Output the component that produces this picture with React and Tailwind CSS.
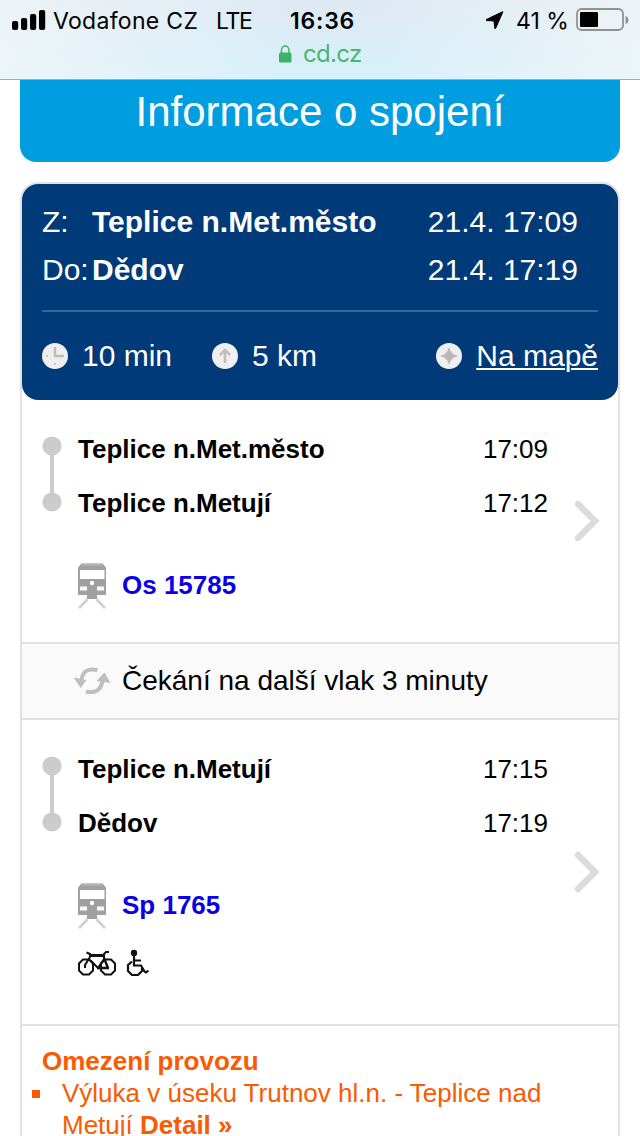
import React from 'react';

const legs = [
    {
        from: 'Teplice n.Met.město',
        departure: '17:09',
        to: 'Teplice n.Metují',
        arrival: '17:12',
        train: 'Os 15785',
        height: 'h-[242px]',
    },
    {
        from: 'Teplice n.Metují',
        departure: '17:15',
        to: 'Dědov',
        arrival: '17:19',
        train: 'Sp 1765',
        height: 'h-[304px]',
        services: true,
    },
];

function SignalIcon() {
    return (
        <svg width="34" height="20" viewBox="0 0 34 20" className="shrink-0">
            <rect x="0" y="11" width="6.2" height="9" rx="2" />
            <rect x="9" y="8" width="6.2" height="12" rx="2" />
            <rect x="18" y="4" width="6.2" height="16" rx="2" />
            <rect x="27" y="0" width="6.2" height="20" rx="2" />
        </svg>
    );
}

function LocationIcon() {
    return (
        <svg width="20" height="19" viewBox="0 0 20 19" className="shrink-0">
            <path d="M17.8 1 10.600 17.400Q10 18.400 9.700 17L9 10 1.800 9.500Q.4 9.200 1.600 8.400L17 1Q18.200.4 17.800 1Z" stroke="#000" strokeWidth="1" strokeLinejoin="round" />
        </svg>
    );
}

function BatteryIcon() {
    return (
        <svg width="54" height="24" viewBox="0 0 54 24" className="shrink-0">
            <rect x="1" y="1" width="46" height="21" rx="4.500" fill="none" stroke="#8f9396" strokeWidth="1.800" />
            <rect x="4" y="4" width="18" height="15" rx="1.200" />
            <path d="M49.500 8q3 1 3 4t-3 4z" fill="#8f9396" />
        </svg>
    );
}

function LockIcon() {
    return (
        <svg width="13" height="18" viewBox="0 0 13 18" className="shrink-0">
            <rect x="0" y="7.500" width="12.500" height="10" rx="1.500" fill="#3cb464" />
            <path d="M2.500 8V5a3.700 4 0 0 1 7.400 0v3" fill="none" stroke="#3cb464" strokeWidth="1.500" />
        </svg>
    );
}

function RoundIcon({ children }) {
    return (
        <svg width="26" height="26" viewBox="0 0 26 26" className="shrink-0">
            <circle cx="13" cy="13" r="13" fill="#efefef" />
            {children}
        </svg>
    );
}

function TrainIcon() {
    return (
        <svg width="28" height="46" viewBox="0 0 28 46" className="shrink-0">
            <path d="M3.500.5h21L28 4.500V32h-9v4H9v-4H0V4.500z" fill="#a0a0a0" />
            <path d="M4 1.500h20" stroke="#b8b8b8" strokeWidth="2" />
            <rect x="2" y="7" width="24.500" height="9" fill="#fff" />
            <circle cx="14" cy="20" r="2.200" fill="#fff" />
            <rect x="2" y="23.500" width="7" height="4" fill="#fafafa" />
            <rect x="19" y="23.500" width="7" height="4" fill="#fafafa" />
            <path d="M9.500 36.500 1 45M18.500 36.500 27 45" fill="none" stroke="#cfcfcf" strokeWidth="2.600" />
        </svg>
    );
}

function TransferIcon() {
    return (
        <svg width="38" height="28" viewBox="0 0 38 28" className="shrink-0">
            <g fill="none" stroke="#bebebe" strokeWidth="4">
                <path d="M8.500 13C9.500 4 15 1 24.500 3" />
                <path d="M29.500 13C28.500 23.500 22 26.500 13 24.500" />
            </g>
            <path d="M.5 10.500 13.500 13 7.800 21zM37.500 16 23.500 14 31.500 5.500z" fill="#bebebe" />
        </svg>
    );
}

function RouteIcon() {
    return (
        <svg width="20" height="76" viewBox="0 0 20 76" className="shrink-0">
            <path d="M10 10v56" stroke="#ccc" strokeWidth="4" />
            <circle cx="10" cy="10" r="9.600" fill="#ccc" />
            <circle cx="10" cy="66" r="9.600" fill="#ccc" />
        </svg>
    );
}

function ChevronIcon() {
    return (
        <svg width="26" height="42" viewBox="0 0 26 42">
            <path d="M4 4 21 21 4 38" fill="none" stroke="#dcdcdc" strokeWidth="6.400" strokeLinecap="round" strokeLinejoin="miter" />
        </svg>
    );
}

function BikeIcon() {
    return (
        <svg width="38" height="26" viewBox="0 0 38 26" fill="none" stroke="#111" strokeWidth="2">
            <path d="M5 9.500h6l4 4v7l-4 4H5l-4-4v-7zM27 9.500h6l4 4v7l-4 4h-6l-4-4v-7z" />
            <path d="M7 18v-3l5-8V4L8.500 2.500M12 10l8 8 6-9V4l2-2h3" />
            <path d="M12 5.500h15" strokeWidth="3" />
            <path d="m26 8 4 10" strokeWidth="2.400" />
            <path d="M19 18h12" strokeWidth="2.600" />
        </svg>
    );
}

function WheelchairIcon() {
    return (
        <svg width="23" height="28" viewBox="0 0 23 28" fill="none" stroke="#111" strokeWidth="2.200">
            <circle cx="8" cy="4" r="3.200" fill="#111" stroke="none" />
            <path d="M8 6v10.500h7l3.500 6 1.500 1 2.500-2M8 11.500h7" />
            <path d="M6 12.500 2 16v6l4 4h6l4-4v-3" />
        </svg>
    );
}

function Leg({ leg }) {
    return (
        <div className={`flex border-b-2 border-[#e1e1e1] box-content pl-5 ${leg.height}`}>
            <div className="w-9 pt-9">
                <RouteIcon />
            </div>
            <div className="w-[470px] pt-[22px]">
                <div className="flex justify-between leading-[54px]">
                    <b>{leg.from}</b>
                    <span>{leg.departure}</span>
                </div>
                <div className="flex justify-between leading-[54px]">
                    <b>{leg.to}</b>
                    <span>{leg.arrival}</span>
                </div>
                <div className="mt-[33px] flex h-[46px] items-center gap-4">
                    <TrainIcon />
                    <b className="relative -top-px text-[#0a00e6]">{leg.train}</b>
                </div>
                {leg.services && (
                    <div className="mt-5 flex items-center gap-2.5">
                        <BikeIcon />
                        <WheelchairIcon />
                    </div>
                )}
            </div>
            <div className="flex items-center pl-[26px]">
                <ChevronIcon />
            </div>
        </div>
    );
}

function StatusBar() {
    return (
        <header className="h-20 border-b border-[#9eadb5] bg-[linear-gradient(90deg,#f1f6f8cc,#f1f6f800_45%,#f1f6f800_60%,#f1f6f8cc),linear-gradient(#dfe9f3,#d6f1fb)] font-['Inter',sans-serif]">
            <div className="flex h-10 items-center pl-3 text-[23px] leading-none">
                <SignalIcon />
                <span className="mt-0.5 ml-[7px] w-[163px] whitespace-nowrap tracking-[0.3px]">Vodafone CZ</span>
                <span className="mt-0.5 w-[74px] tracking-[-1.3px]">LTE</span>
                <span className="mt-0.5 w-[195px] font-semibold tracking-[0.8px]">16:36</span>
                <LocationIcon />
                <span className="mt-0.5 ml-[11px] w-[60px] text-[23px] whitespace-nowrap">41 %</span>
                <BatteryIcon />
            </div>
            <div className="flex h-7 items-center gap-[11px] pl-[279px] text-[24px] leading-none text-[#4bb673]">
                <LockIcon />
                <span className="tracking-[-0.7px]">cd.cz</span>
            </div>
        </header>
    );
}

function Summary() {
    return (
        <div className="h-[216px] rounded-[16px] bg-[#003a78] px-5 pt-3.5 text-[30px] leading-[48px] text-white">
            <div className="flex">
                <span className="w-[50px]">Z:</span>
                <b className="flex-1">Teplice n.Met.město</b>
                <span className="mr-5">21.4. 17:09</span>
            </div>
            <div className="flex">
                <span className="w-[50px]">Do:</span>
                <b className="flex-1">Dědov</b>
                <span className="mr-5">21.4. 17:19</span>
            </div>
            <div className="mt-4 mb-5 h-0.5 bg-[#3268a0]" />
            <div className="flex items-center">
                <RoundIcon>
                    <path d="M13 4v9h9" fill="none" stroke="#bdbdbd" strokeWidth="2.500" />
                    <path d="M4 13h2M13 20v2" stroke="#d8bdb4" strokeWidth="2" />
                </RoundIcon>
                <span className="ml-3.5 w-[130px]">10 min</span>
                <RoundIcon>
                    <path d="M13 20V8M8 12l5-5 5 5" fill="none" stroke="#bdbdbd" strokeWidth="2.500" />
                </RoundIcon>
                <span className="ml-3.5 flex-1">5 km</span>
                <RoundIcon>
                    <circle cx="13" cy="13" r="5" fill="#cfcfcf" />
                    <path d="m13 4 2.400 6.600L22 13l-6.600 2.400L13 22l-2.400-6.600L4 13l6.600-2.400z" fill="#b8b8b8" />
                </RoundIcon>
                <a className="ml-3.5 underline decoration-2 underline-offset-2">Na mapě</a>
            </div>
        </div>
    );
}

export default function App() {
    return (
        <div className="h-[1136px] w-[640px] overflow-hidden bg-white font-['Liberation_Sans',Arial,sans-serif] text-[26px] text-black">
            <StatusBar />
            <h1 className="mx-5 h-[82px] rounded-b-[16px] bg-[#009de0] text-center text-[42px] leading-[64px] text-white">
                Informace o spojení
            </h1>
            <main className="mx-5 mt-5 h-[1000px] rounded-t-[18px] border-2 border-[#e1e1e1]">
                <Summary />
                <Leg leg={legs[0]} />
                <div className="flex h-[76px] items-center border-b-2 border-[#e1e1e1] bg-[#fafafa] pl-[51px]">
                    <TransferIcon />
                    <span className="ml-[11px] text-[28px] whitespace-nowrap">Čekání na další vlak 3 minuty</span>
                </div>
                <Leg leg={legs[1]} />
                <section className="pt-[19px] pl-5 leading-8 text-[#fa5a00]">
                    <h2 className="font-bold">Omezení provozu</h2>
                    <div className="-ml-2.5 flex w-[540px]">
                        <span className="mt-[13px] mr-[22px] size-2 shrink-0 bg-[#fa5a00]" />
                        <p>
                            Výluka v úseku Trutnov hl.n. - Teplice nad Metují <b>Detail »</b>
                        </p>
                    </div>
                </section>
            </main>
        </div>
    );
}
